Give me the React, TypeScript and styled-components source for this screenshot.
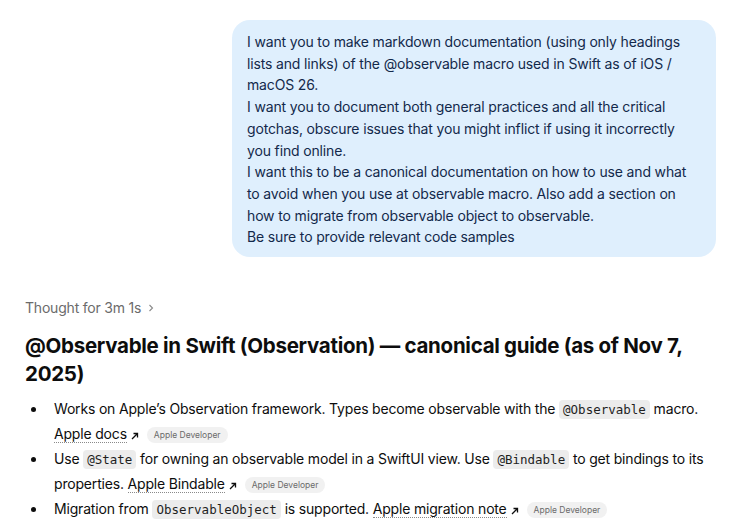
import styled, { createGlobalStyle } from 'styled-components';

const GlobalStyle = createGlobalStyle`
  html, body {
    margin: 0;
    padding: 0;
    background: #fff;
  }
  body {
    font-family: Inter, "Noto Sans", sans-serif;
    color: #0d0d0d;
    -webkit-font-smoothing: antialiased;
  }
`;

const Page = styled.main`
  display: flex;
  flex-direction: column;
  padding: 20px 24px 0 25px;
  width: 740px;
  box-sizing: border-box;
`;

const UserRow = styled.div`
  display: flex;
  justify-content: flex-end;
`;

const Bubble = styled.div`
  width: 484px;
  box-sizing: border-box;
  padding: 11px 15px 9px;
  border-radius: 18px;
  background: #dfeffd;
  color: #13294b;
  font-size: 14px;
  letter-spacing: -0.15px;
  line-height: 21.7px;
`;

const BubbleLine = styled.p`
  margin: 0;
`;

const Thought = styled.button`
  display: flex;
  align-items: center;
  gap: 6px;
  margin-top: 41px;
  padding: 0;
  border: 0;
  background: none;
  font-family: inherit;
  font-size: 14px;
  letter-spacing: -0.2px;
  line-height: 20px;
  color: #6b6b6b;
`;

const Heading = styled.h1`
  margin: 14px 0 0;
  font-size: 20.5px;
  letter-spacing: -0.28px;
  line-height: 28px;
  font-weight: 700;
  color: #0d0d0d;
`;

const List = styled.ul`
  margin: 8px 0 0;
  padding-left: 29px;
  list-style: none;
  font-size: 14px;
  letter-spacing: -0.18px;
  line-height: 25px;
  color: #0d0d0d;
`;

const Item = styled.li`
  &::before {
    content: '';
    display: inline-block;
    width: 5px;
    height: 5px;
    border-radius: 50%;
    background: #0d0d0d;
    margin-left: -23px;
    margin-right: 18px;
    vertical-align: 2px;
  }
`;

const Code = styled.code`
  font-family: "DejaVu Sans Mono", "Liberation Mono", monospace;
  font-size: 12.5px;
  line-height: 1;
  letter-spacing: 0;
  background: #ececec;
  border-radius: 4px;
  padding: 2px 4px;
  color: #1f1f1f;
`;

const Link = styled.a`
  color: #0d0d0d;
  text-decoration: none;
  border-bottom: 1px dotted #8a8a8a;
`;

const Arrow = styled.svg`
  margin-left: 4px;
  vertical-align: -1px;
`;

const Source = styled.span`
  display: inline-block;
  margin-left: 8px;
  padding: 0 7px;
  border-radius: 9px;
  background: #f1f1f1;
  color: #6b6b6b;
  font-size: 8.5px;
  letter-spacing: 0;
  line-height: 16px;
  vertical-align: 1px;
`;

const Chevron = () => (
  <svg width="8" height="8" viewBox="0 0 8 8" fill="none">
    <path d="M2.5 1 L5.5 4 L2.5 7" stroke="#8a8a8a" strokeWidth="1.1" />
  </svg>
);

const ExtLink = ({ label }: { label: string }) => (
  <>
    <Link href="#">{label}</Link>
    <Arrow width="8" height="8" viewBox="0 0 8 8" fill="none">
      <path d="M1 7 L6.5 1.5 M2.5 1.5 H6.5 V5.5" stroke="#0d0d0d" strokeWidth="1.3" />
    </Arrow>
    <Source>Apple Developer</Source>
  </>
);

const prompt = [
  'I want you to make markdown documentation (using only headings lists and links) of the @observable macro used in Swift as of iOS / macOS 26.',
  'I want you to document both general practices and all the critical gotchas, obscure issues that you might inflict if using it incorrectly you find online.',
  'I want this to be a canonical documentation on how to use and what to avoid when you use at observable macro. Also add a section on how to migrate from observable object to observable.',
  'Be sure to provide relevant code samples',
];

export default function App() {
  return (
    <>
      <GlobalStyle />
      <Page>
        <UserRow>
          <Bubble>
            {prompt.map((line) => (
              <BubbleLine key={line}>{line}</BubbleLine>
            ))}
          </Bubble>
        </UserRow>
        <Thought>
          Thought for 3m 1s
          <Chevron />
        </Thought>
        <Heading>@Observable in Swift (Observation) — canonical guide (as of Nov 7, 2025)</Heading>
        <List>
          <Item>
            Works on Apple’s Observation framework. Types become observable with the <Code>@Observable</Code> macro.{' '}
            <ExtLink label="Apple docs" />
          </Item>
          <Item>
            Use <Code>@State</Code> for owning an observable model in a SwiftUI view. Use <Code>@Bindable</Code> to get
            bindings to its properties. <ExtLink label="Apple Bindable" />
          </Item>
          <Item>
            Migration from <Code>ObservableObject</Code> is supported. <ExtLink label="Apple migration note" />
          </Item>
        </List>
      </Page>
    </>
  );
}
